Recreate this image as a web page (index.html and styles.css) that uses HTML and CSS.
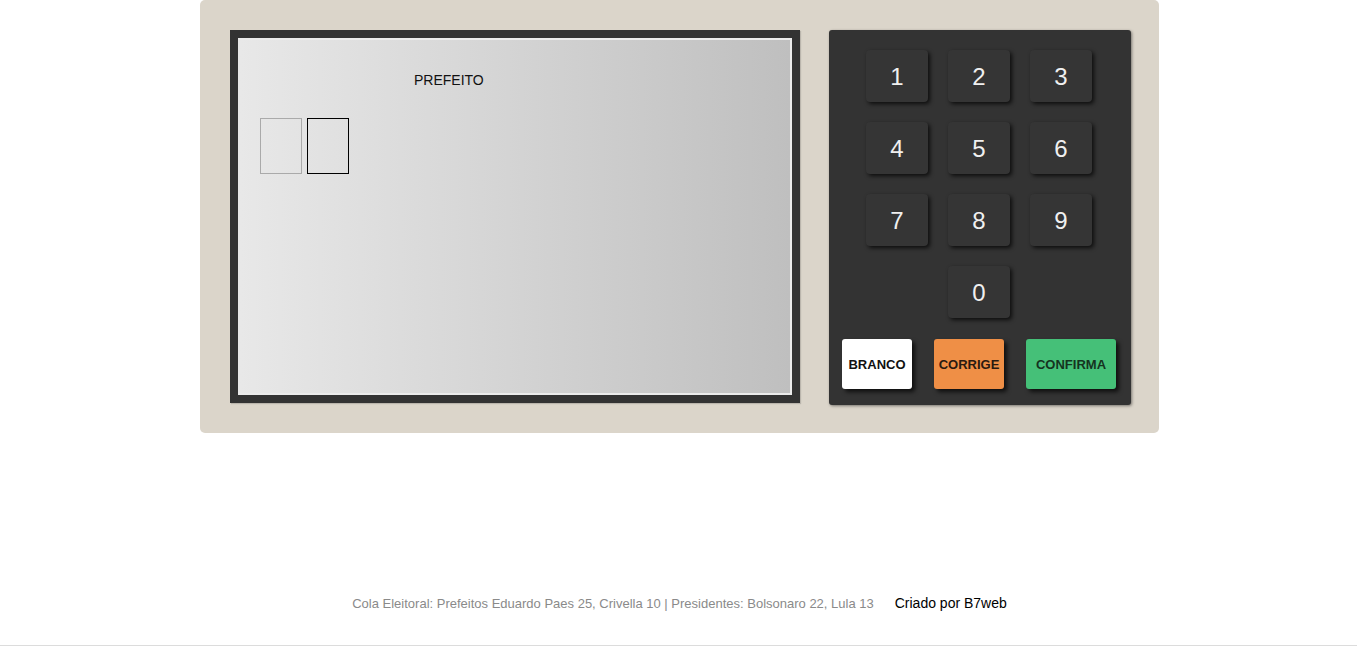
FILE: index.html
```html
<!DOCTYPE html>
<html lang="pt-BR">
<head>
<meta charset="utf-8">
<title>Urna Eletrônica</title>
<link rel="stylesheet" href="styles.css">
</head>
<body>
<div class="urna">
  <div class="tela">
    <div class="tela-interna">
      <div class="cargo">PREFEITO</div>
      <div class="numeros">
        <div class="numero"></div>
        <div class="numero pisca"></div>
      </div>
    </div>
  </div>
  <div class="teclado">
    <div class="linha">
      <div class="botao">1</div>
      <div class="botao">2</div>
      <div class="botao">3</div>
    </div>
    <div class="linha">
      <div class="botao">4</div>
      <div class="botao">5</div>
      <div class="botao">6</div>
    </div>
    <div class="linha">
      <div class="botao">7</div>
      <div class="botao">8</div>
      <div class="botao">9</div>
    </div>
    <div class="linha">
      <div class="botao">0</div>
    </div>
    <div class="acoes">
      <div class="acao branco">BRANCO</div>
      <div class="acao corrige">CORRIGE</div>
      <div class="acao confirma">CONFIRMA</div>
    </div>
  </div>
</div>
<div class="rodape">
  <span class="cola">Cola Eleitoral: Prefeitos Eduardo Paes 25, Crivella 10 | Presidentes: Bolsonaro 22, Lula 13</span><span class="credito">Criado por B7web</span>
</div>
<div class="separador"></div>
</body>
</html>
```

FILE: styles.css
```css
* { box-sizing: border-box; }
body {
  margin: 0;
  padding-left: 2px;
  font-family: "Liberation Sans", Arial, sans-serif;
  background: #fff;
}
.urna {
  width: 959px;
  height: 433px;
  margin: 0 auto;
  background: #dbd5ca;
  border-radius: 5px;
  padding: 30px 28px 30px 30px;
  display: flex;
  gap: 29px;
}
.tela {
  width: 570px;
  height: 373px;
  flex-shrink: 0;
  border: 8px solid #333;
  box-shadow: 1px 1px 1px rgba(0,0,0,0.15);
}
.tela-interna {
  height: 100%;
  border: 2px solid #ebebeb;
  border-left-color: #e8e8e8;
  background: linear-gradient(to right, #e8e8e8, #bfbfbf);
  padding: 32px 0 0 20px;
}
.cargo {
  font-size: 14px;
  color: #111;
  margin-left: 154px;
  line-height: 16px;
}
.numeros {
  display: flex;
  gap: 5px;
  margin-top: 30px;
}
.numero {
  width: 42px;
  height: 56px;
  border: 1px solid #aaa;
}
.numero.pisca {
  border-color: #000;
}
.teclado {
  width: 302px;
  height: 375px;
  flex-shrink: 0;
  background: #333;
  border-radius: 3px;
  box-shadow: 1px 1px 3px rgba(0,0,0,0.45);
  padding: 20px 2px 0 0;
  display: flex;
  flex-direction: column;
  gap: 20px;
}
.linha {
  display: flex;
  justify-content: center;
  gap: 20px;
}
.botao {
  width: 62px;
  height: 52px;
  background: #353535;
  border-radius: 4px;
  box-shadow: 2px 2px 4px rgba(0,0,0,0.75);
  color: #f0f0f0;
  font-size: 24px;
  padding-top: 1px;
  display: flex;
  align-items: center;
  justify-content: center;
}
.acoes {
  display: flex;
  justify-content: center;
  gap: 22px;
  margin-top: 1px;
}
.acao {
  width: 70px;
  height: 50px;
  border-radius: 3px;
  box-shadow: 3px 3px 4px rgba(0,0,0,0.7);
  font-size: 13px;
  font-weight: bold;
  display: flex;
  align-items: center;
  justify-content: center;
}
.branco { background: #fff; color: #111; }
.corrige { background: #ef8f46; color: #2a1a10; }
.confirma { width: 90px; background: #45c078; color: #15331f; }
.rodape {
  margin-top: 162px;
  height: 16px;
  text-align: center;
  line-height: 16px;
}
.cola {
  font-size: 13px;
  color: #8a8a8a;
}
.credito {
  font-size: 14px;
  color: #000;
  margin-left: 21px;
}
.separador {
  margin-top: 34px;
  margin-left: -2px;
  height: 1px;
  background: #dcdcdc;
}
```
